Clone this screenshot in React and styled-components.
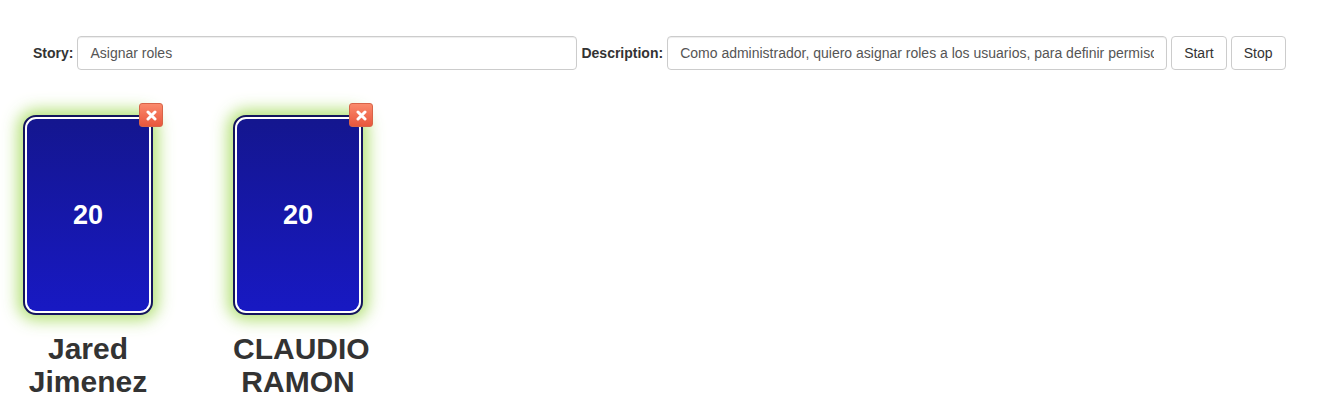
import React from 'react';
import styled, { createGlobalStyle } from 'styled-components';

const GlobalStyle = createGlobalStyle`
  body {
    margin: 0;
    background: #fff;
    font-family: "Liberation Sans", Arial, sans-serif;
    color: #333;
  }
`;

const Page = styled.div`
  padding: 36px 0 0 33px;
`;

const Toolbar = styled.div`
  display: flex;
  align-items: center;
  gap: 4px;
`;

const Label = styled.label`
  font-size: 14px;
  font-weight: bold;
  color: #333;
`;

const Input = styled.input`
  box-sizing: border-box;
  width: 500px;
  height: 34px;
  padding: 6px 12px;
  font-family: inherit;
  font-size: 14px;
  color: #555;
  border: 1px solid #ccc;
  border-radius: 4px;
  box-shadow: inset 0 1px 1px rgba(0, 0, 0, 0.075);
  outline: none;
`;

const Button = styled.button`
  box-sizing: border-box;
  height: 34px;
  padding: 6px 12px;
  font-family: inherit;
  font-size: 14px;
  color: #333;
  background: #fff;
  border: 1px solid #ccc;
  border-radius: 4px;
  cursor: pointer;
`;

const Table = styled.div`
  display: flex;
  gap: 80px;
  margin: 45px 0 0 -10px;
`;

const Player = styled.div`
  width: 130px;
`;

const Card = styled.div`
  position: relative;
  box-sizing: border-box;
  width: 130px;
  height: 200px;
  padding: 2px;
  background: #fff;
  border: 2px solid #14145e;
  border-radius: 13px;
  box-shadow: 0 0 16px 5px rgba(165, 218, 90, 0.85);
`;

const Face = styled.div`
  height: 100%;
  display: flex;
  align-items: center;
  justify-content: center;
  border-radius: 9px;
  background: linear-gradient(to bottom, #14168f, #1819c3);
  color: #fff;
  font-size: 27px;
  font-weight: bold;
`;

const Close = styled.button`
  position: absolute;
  top: -14px;
  right: -12px;
  box-sizing: border-box;
  width: 24px;
  height: 24px;
  padding: 0;
  display: flex;
  align-items: center;
  justify-content: center;
  background: linear-gradient(to bottom, #fa8a6b, #e9573d);
  border: 1px solid #d86448;
  border-radius: 3px;
  cursor: pointer;
`;

const Name = styled.h2`
  margin: 17px 0 0;
  font-size: 30px;
  line-height: 33px;
  font-weight: bold;
  color: #333;
  text-align: center;
`;

const players = [
  { name: 'Jared Jimenez', vote: 20 },
  { name: 'CLAUDIO RAMON', vote: 20 },
];

function PlayerCard({ name, vote }) {
  return (
    <Player>
      <Card>
        <Face>{vote}</Face>
        <Close aria-label="remove">
          <svg width="11" height="11" viewBox="0 0 11 11">
            <path d="M2 2 L9 9 M9 2 L2 9" stroke="#fff" strokeWidth="3" strokeLinecap="round" />
          </svg>
        </Close>
      </Card>
      <Name>{name}</Name>
    </Player>
  );
}

export default function App() {
  return (
    <Page>
      <GlobalStyle />
      <Toolbar>
        <Label>Story:</Label>
        <Input defaultValue="Asignar roles" />
        <Label>Description:</Label>
        <Input defaultValue="Como administrador, quiero asignar roles a los usuarios, para definir permisos" />
        <Button>Start</Button>
        <Button>Stop</Button>
      </Toolbar>
      <Table>
        {players.map((p) => (
          <PlayerCard key={p.name} {...p} />
        ))}
      </Table>
    </Page>
  );
}
